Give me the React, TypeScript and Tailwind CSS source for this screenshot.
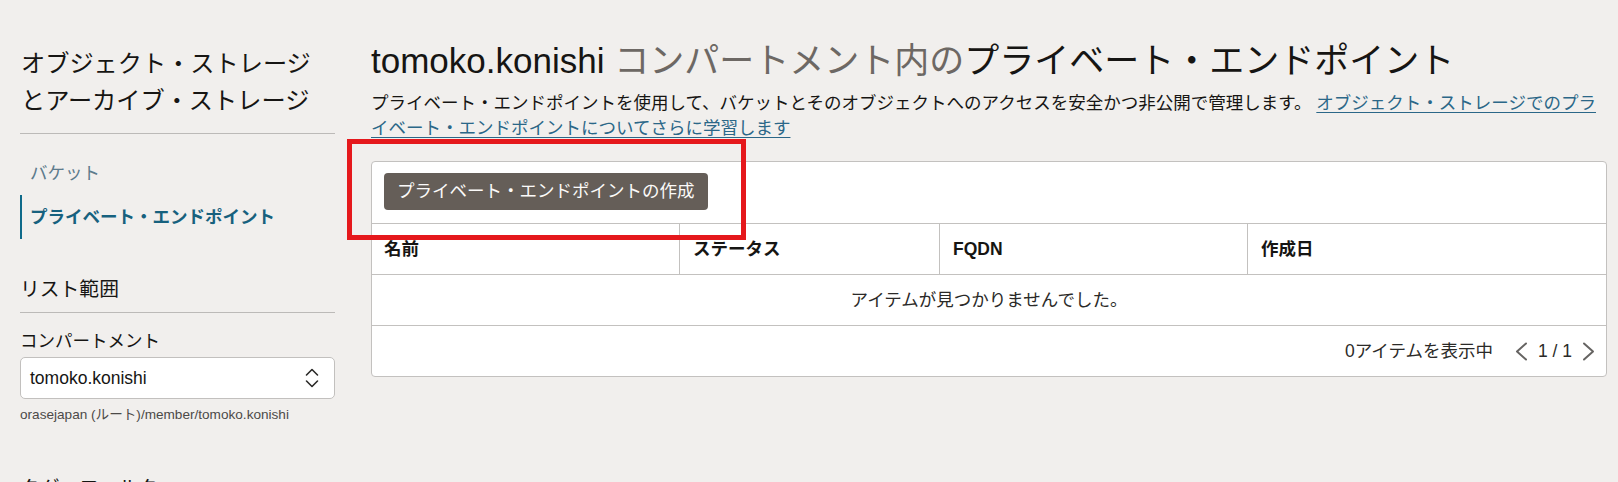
const font = "font-[family-name:'Liberation_Sans','Noto_Sans_CJK_JP',sans-serif]";

function UpDownIcon() {
  return (
    <svg width="14" height="20" viewBox="0 0 14 20" fill="none" stroke="#2b2a28" strokeWidth="1.6" strokeLinecap="round" strokeLinejoin="round">
      <path d="M1.5 7 L7 1.5 L12.5 7" />
      <path d="M1.5 13 L7 18.5 L12.5 13" />
    </svg>
  );
}

function Chevron({ dir }: { dir: "left" | "right" }) {
  return (
    <svg width="13" height="19" viewBox="0 0 13 19" fill="none" stroke="#666462" strokeWidth="2" strokeLinecap="round" strokeLinejoin="round">
      {dir === "left" ? <path d="M11 1.5 L2 9.5 L11 17.5" /> : <path d="M2 1.5 L11 9.5 L2 17.5" />}
    </svg>
  );
}

function Sidebar() {
  return (
    <aside className="w-[315px] shrink-0 pt-[45px]">
      <h2 className="text-[24.2px] leading-[37px] text-[#161513] pl-[1px]">
        オブジェクト・ストレージ
        <br />
        とアーカイブ・ストレージ
      </h2>
      <div className="mt-[14px] h-px bg-[#bcbab8]" />

      <nav className="mt-[17px] text-[17.5px]">
        <div className="h-[44px] flex items-center pl-[10px] text-[#5d7b8c]">バケット</div>
        <div className="h-[44px] flex items-center pl-[8px] border-l-[2px] border-[#0f6a8a] font-bold text-[#17617e]">
          プライベート・エンドポイント
        </div>
      </nav>

      <div className="mt-[36px] text-[19.8px] leading-[28px] pb-[9px] border-b border-[#bcbab8] text-[#161513]">
        リスト範囲
      </div>
      <div className="mt-[16px] text-[17.5px] leading-[24px] text-[#161513]">コンパートメント</div>
      <div className="mt-[4px] h-[42px] bg-white border border-[#c2c0be] rounded-[5px] flex items-center justify-between pl-[9px] pr-[15px]">
        <span className="text-[17.5px] text-[#161513]">tomoko.konishi</span>
        <UpDownIcon />
      </div>
      <div className="mt-[7px] text-[13.6px] leading-[18px] text-[#4c4a48]">
        orasejapan (ルート)/member/tomoko.konishi
      </div>
      <div className="mt-[50px] text-[19.8px] leading-[28px] text-[#161513]">タグ・フィルタ</div>
    </aside>
  );
}

const columns = ["名前", "ステータス", "FQDN", "作成日"];

function EndpointTable() {
  return (
    <div className="mt-[20px] bg-white border border-[#c3c1bf] rounded-[4px]">
      <div className="h-[61px] pt-[11px] pl-[12px]">
        <button className="h-[37px] px-[13px] rounded-[4px] bg-[#655e58] text-[#fbfaf9] text-[17.5px]">
          プライベート・エンドポイントの作成
        </button>
      </div>

      <div className="grid grid-cols-[308px_260px_308px_1fr] h-[51px] border-t border-[#c3c1bf]">
        {columns.map((c, i) => (
          <div
            key={c}
            className={`flex items-center font-bold text-[17.5px] text-[#161513] ${i === 0 ? "pl-[12px]" : "pl-[13px]"} ${i < 3 ? "border-r border-[#c3c1bf]" : ""}`}
          >
            {c}
          </div>
        ))}
      </div>

      <div className="h-[51px] border-t border-[#c3c1bf] flex items-center justify-center text-[17.5px] text-[#2b2a28]">
        アイテムが見つかりませんでした。
      </div>

      <div className="h-[51px] border-t border-[#c3c1bf] flex items-center justify-end pr-[11px] text-[17.5px] text-[#2b2a28]">
        <span>0アイテムを表示中</span>
        <span className="ml-[22px]">
          <Chevron dir="left" />
        </span>
        <span className="ml-[10px]">1 / 1</span>
        <span className="ml-[10px]">
          <Chevron dir="right" />
        </span>
      </div>
    </div>
  );
}

export default function App() {
  return (
    <div className={`${font} relative w-full h-[482px] overflow-hidden bg-[#f1efed] flex pl-[20px] pr-[11px]`}>
      <Sidebar />

      <main className="ml-[36px] flex-1 pt-[39px]">
        <h1 className="text-[35px] leading-[44px] text-[#161513] whitespace-nowrap">
          tomoko.konishi <span className="text-[#6d6864]">コンパートメント内の</span>プライベート・エンドポイント
        </h1>
        <p className="mt-[8px] text-[17.5px] leading-[25px] text-[#161513]">
          プライベート・エンドポイントを使用して、バケットとそのオブジェクトへのアクセスを安全かつ非公開で管理します。{" "}
          <a href="#" className="text-[#2b6788] underline underline-offset-[3px]">
            オブジェクト・ストレージでのプライベート・エンドポイントについてさらに学習します
          </a>
        </p>
        <EndpointTable />
      </main>

      {/* highlight box around the create button */}
      <div className="absolute left-[347px] top-[139px] w-[399px] h-[101px] border-[5px] border-[#e5181c] pointer-events-none" />
    </div>
  );
}
